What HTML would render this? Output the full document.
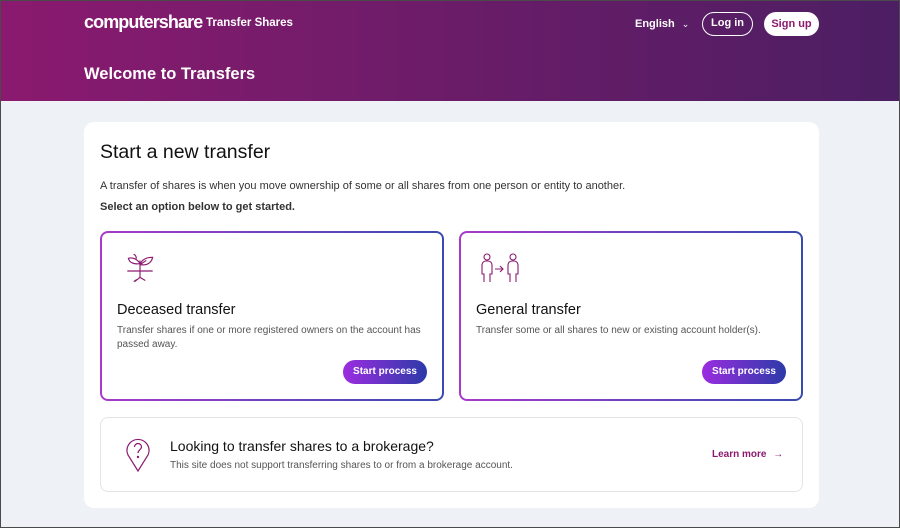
<!DOCTYPE html>
<html><head><style>
*{box-sizing:border-box;margin:0;padding:0}
body{width:900px;height:528px;overflow:hidden;font-family:"Liberation Sans",sans-serif;background:#eef1f5;position:relative;color:#111}
.frame{position:absolute;inset:0;border:1px solid #4a4a4a;pointer-events:none;z-index:9}
.hdr{position:absolute;left:0;top:0;width:900px;height:101px;background:linear-gradient(90deg,#8b1a6f 0%,#6e1c69 45%,#4c1e63 100%);color:#fff}
.abs{position:absolute}
.card{position:absolute;left:84px;top:122px;width:735px;height:386px;background:#fff;border-radius:10px}
.opt{position:absolute;top:231px;width:344px;height:170px;border-radius:8px;border:2px solid transparent;background:linear-gradient(#fff,#fff) padding-box,linear-gradient(90deg,#a73bc8,#3a4bb0) border-box}
.opt h3{position:absolute;left:15px;top:69px;font-size:14.5px;font-weight:normal;color:#111}
.opt p{position:absolute;left:15px;top:91px;font-size:10px;line-height:14px;color:#555;width:310px}
.btn{position:absolute;right:15px;top:127px;width:84px;height:24px;border-radius:12px;background:linear-gradient(90deg,#9b2de0,#2c3aa8);color:#fff;font-size:10px;font-weight:bold;text-align:center;line-height:24px}
</style></head><body>
<div class="hdr">
 <div class="abs" style="left:84px;top:12px;font-size:18px;font-weight:bold;letter-spacing:-0.9px">computershare</div>
 <div class="abs" style="left:206px;top:17px;font-size:11.5px;font-weight:bold">Transfer Shares</div>
 <div class="abs" style="left:635px;top:18px;font-size:11px;font-weight:bold">English <span style="font-weight:normal;font-size:9px;margin-left:4px">&#8964;</span></div>
 <div class="abs" style="left:702px;top:12px;width:51px;height:24px;border:1.5px solid #fff;border-radius:12px;font-size:11px;font-weight:bold;text-align:center;line-height:21px">Log in</div>
 <div class="abs" style="left:764px;top:12px;width:55px;height:24px;background:#fff;border-radius:12px;font-size:11px;font-weight:bold;text-align:center;line-height:24px;color:#8b1a6f">Sign up</div>
 <div class="abs" style="left:84px;top:65px;font-size:16.5px;font-weight:bold">Welcome to Transfers</div>
</div>
<div class="card"></div>
<div class="abs" style="left:100px;top:141px;font-size:19.5px">Start a new transfer</div>
<div class="abs" style="left:100px;top:180px;font-size:11px;color:#333">A transfer of shares is when you move ownership of some or all shares from one person or entity to another.</div>
<div class="abs" style="left:100px;top:201px;font-size:11px;font-weight:bold;color:#333">Select an option below to get started.</div>
<div class="opt" style="left:100px">
 <svg class="abs" style="left:20px;top:19px" width="36" height="38" viewBox="0 0 32 36" fill="none" stroke="#8b1a6f" stroke-width="1.1"><path d="M4 18h24M16 18V8M16 12c2-6 8-7 12-7-1 5-5 8-12 7zM16 12l6-4M16 11C13 6 8 5 5 6c1 4 5 6 11 5M10 2c2 1 3 3 2 5M16 18v6l-5 4M16 24l5 3M13 26l-3 2"/></svg>
 <h3>Deceased transfer</h3>
 <p>Transfer shares if one or more registered owners on the account has passed away.</p>
 <div class="btn">Start process</div>
</div>
<div class="opt" style="left:459px">
 <svg class="abs" style="left:18px;top:18px" width="44" height="38" viewBox="0 0 44 36" fill="none" stroke="#8b1a6f" stroke-width="1.1"><circle cx="8" cy="5" r="3"/><path d="M5 30V22H3V13a4 4 0 014-4h2a4 4 0 014 4v9h-2v8"/><circle cx="34" cy="5" r="3"/><path d="M31 30V22H29V13a4 4 0 014-4h2a4 4 0 014 4v9h-2v8"/><path d="M16 17h8M21 14l3 3-3 3"/></svg>
 <h3>General transfer</h3>
 <p>Transfer some or all shares to new or existing account holder(s).</p>
 <div class="btn">Start process</div>
</div>
<div class="abs" style="left:100px;top:417px;width:703px;height:75px;border:1px solid #e2e4e8;border-radius:8px">
 <svg class="abs" style="left:24px;top:19px" width="26" height="36" viewBox="0 0 26 36" fill="none" stroke="#8b1a6f" stroke-width="1.2"><path d="M13 34L3 18A11 11 0 1123 18z"/><path d="M9.5 10a3.5 3.5 0 117 0c0 2.5-3.5 3-3.5 6"/><circle cx="13" cy="20" r=".6" fill="#8b1a6f"/></svg>
 <div class="abs" style="left:69px;top:20px;font-size:14px">Looking to transfer shares to a brokerage?</div>
 <div class="abs" style="left:69px;top:42px;font-size:10px;color:#555">This site does not support transferring shares to or from a brokerage account.</div>
 <div class="abs" style="left:611px;top:31px;font-size:10px;font-weight:bold;color:#8b1a6f">Learn more <span style="font-weight:normal;margin-left:4px">&#8594;</span></div>
</div>
<div class="frame"></div>
</body></html>
